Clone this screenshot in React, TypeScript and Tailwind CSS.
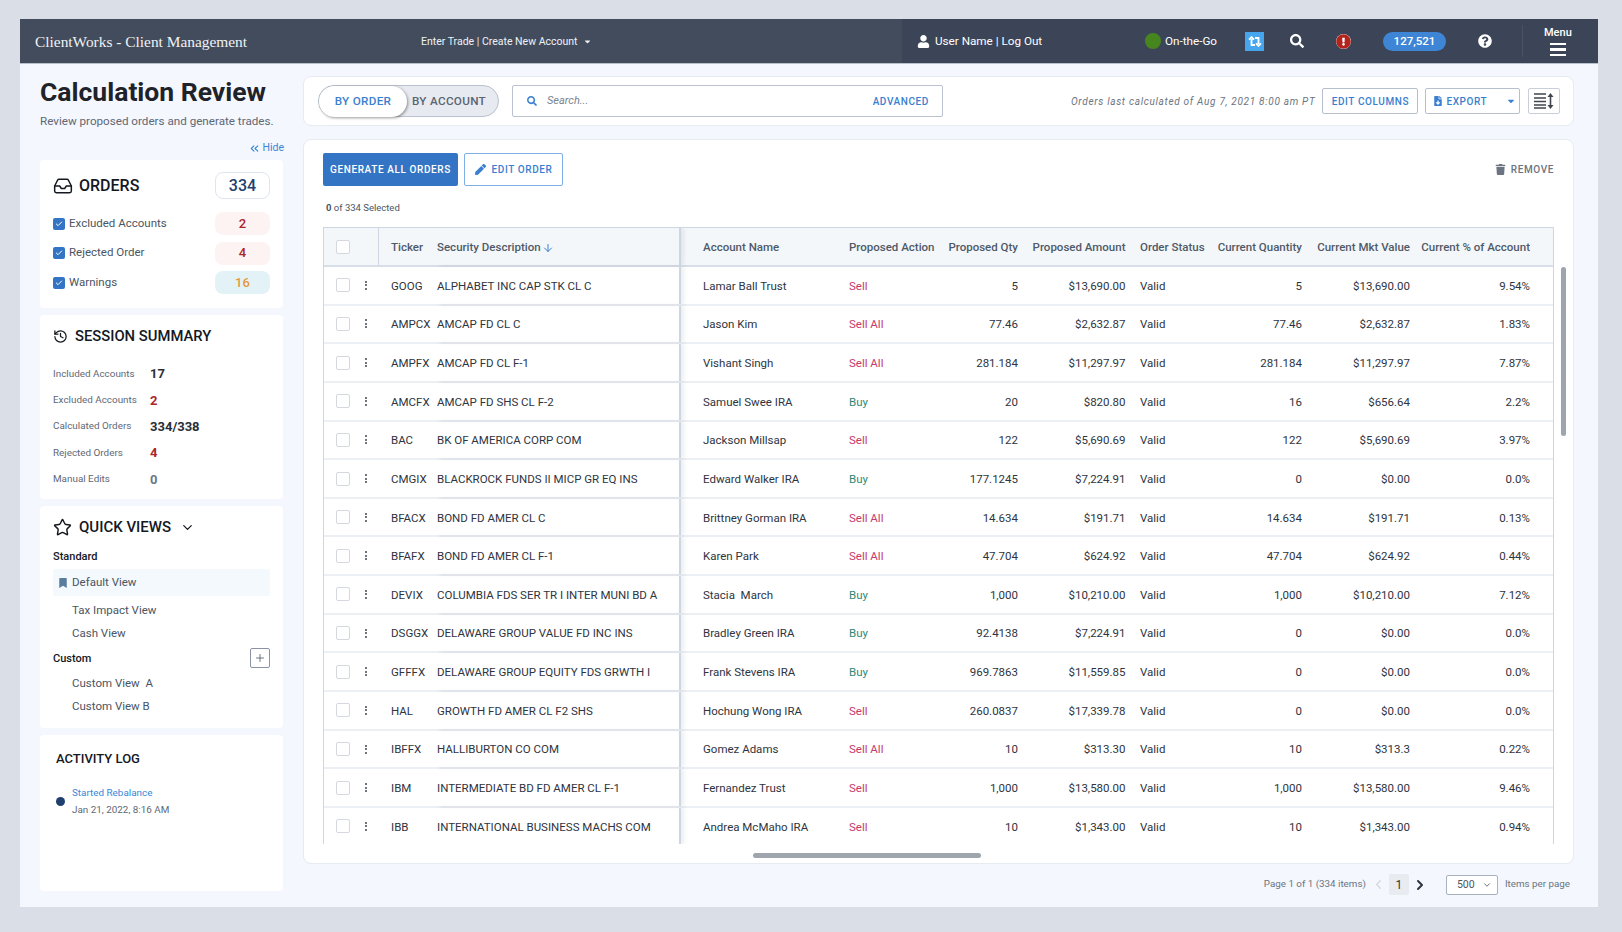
import { ChevronDown, ChevronLeft, ChevronRight, ChevronsLeft, History, Inbox, Plus, Star, ArrowDown, Check } from "lucide-react";
import { FaBookmark, FaCaretDown, FaExclamationCircle, FaFileDownload, FaPen, FaQuestionCircle, FaSearch, FaTrash, FaUser } from "react-icons/fa";

const rows = [
  ["GOOG", "ALPHABET INC CAP STK CL C", "Lamar Ball Trust", "Sell", "5", "$13,690.00", "5", "$13,690.00", "9.54%"],
  ["AMPCX", "AMCAP FD CL C", "Jason Kim", "Sell All", "77.46", "$2,632.87", "77.46", "$2,632.87", "1.83%"],
  ["AMPFX", "AMCAP FD CL F-1", "Vishant Singh", "Sell All", "281.184", "$11,297.97", "281.184", "$11,297.97", "7.87%"],
  ["AMCFX", "AMCAP FD SHS CL F-2", "Samuel Swee IRA", "Buy", "20", "$820.80", "16", "$656.64", "2.2%"],
  ["BAC", "BK OF AMERICA CORP COM", "Jackson Millsap", "Sell", "122", "$5,690.69", "122", "$5,690.69", "3.97%"],
  ["CMGIX", "BLACKROCK FUNDS II MICP GR EQ INS", "Edward Walker IRA", "Buy", "177.1245", "$7,224.91", "0", "$0.00", "0.0%"],
  ["BFACX", "BOND FD AMER CL C", "Brittney Gorman IRA", "Sell All", "14.634", "$191.71", "14.634", "$191.71", "0.13%"],
  ["BFAFX", "BOND FD AMER CL F-1", "Karen Park", "Sell All", "47.704", "$624.92", "47.704", "$624.92", "0.44%"],
  ["DEVIX", "COLUMBIA FDS SER TR I INTER MUNI BD A", "Stacia  March", "Buy", "1,000", "$10,210.00", "1,000", "$10,210.00", "7.12%"],
  ["DSGGX", "DELAWARE GROUP VALUE FD INC INS", "Bradley Green IRA", "Buy", "92.4138", "$7,224.91", "0", "$0.00", "0.0%"],
  ["GFFFX", "DELAWARE GROUP EQUITY FDS GRWTH I", "Frank Stevens IRA", "Buy", "969.7863", "$11,559.85", "0", "$0.00", "0.0%"],
  ["HAL", "GROWTH FD AMER CL F2 SHS", "Hochung Wong IRA", "Sell", "260.0837", "$17,339.78", "0", "$0.00", "0.0%"],
  ["IBFFX", "HALLIBURTON CO COM", "Gomez Adams", "Sell All", "10", "$313.30", "10", "$313.3", "0.22%"],
  ["IBM", "INTERMEDIATE BD FD AMER CL F-1", "Fernandez Trust", "Sell", "1,000", "$13,580.00", "1,000", "$13,580.00", "9.46%"],
  ["IBB", "INTERNATIONAL BUSINESS MACHS COM", "Andrea McMaho IRA", "Sell", "10", "$1,343.00", "10", "$1,343.00", "0.94%"],
];

function TickBox() {
  return (
    <span className="flex h-[12px] w-[12px] items-center justify-center rounded-[2px] bg-[#3474c4]">
      <Check size={8} strokeWidth={3} className="text-white" />
    </span>
  );
}

function Orders() {
  const items = [
    { label: "Excluded Accounts", value: "2", cls: "bg-[#fdf3f3] text-[#a8262b]" },
    { label: "Rejected Order", value: "4", cls: "bg-[#fdf3f3] text-[#a8262b]" },
    { label: "Warnings", value: "16", cls: "bg-[#e3f2f6] text-[#e39a3b]" },
  ];
  return (
    <section className="h-[148px] rounded-[4px] bg-white px-[13px] pt-[12px]">
      <div className="flex h-[27px] items-center justify-between">
        <div className="flex items-center gap-[6px]">
          <Inbox size={20} strokeWidth={1.8} className="text-[#14181f]" />
          <span className="text-[16px] font-medium text-[#14181f]">ORDERS</span>
        </div>
        <span className="flex h-[27px] w-[55px] items-center justify-center rounded-[8px] border border-[#dfe5f0] text-[16px] font-medium text-[#1f3f6e]">334</span>
      </div>
      <ul className="mt-[13px] flex flex-col gap-[6.5px]">
        {items.map((item) => (
          <li key={item.label} className="flex h-[23px] items-center justify-between">
            <div className="flex items-center gap-[4px] text-[11.5px] text-[#4b5563]">
              <TickBox />
              {item.label}
            </div>
            <span className={"flex h-[23px] w-[55px] items-center justify-center rounded-[8px] text-[13px] font-medium " + item.cls}>{item.value}</span>
          </li>
        ))}
      </ul>
    </section>
  );
}

function Session() {
  const items = [
    ["Included Accounts", "17", "text-[#2b2f36]"],
    ["Excluded Accounts", "2", "text-[#a8262b]"],
    ["Calculated Orders", "334/338", "text-[#2b2f36]"],
    ["Rejected Orders", "4", "text-[#a8262b]"],
    ["Manual Edits", "0", "text-[#6b7686]"],
  ];
  return (
    <section className="h-[184px] rounded-[4px] bg-white px-[13px] pt-[12px]">
      <div className="flex h-[18px] items-center gap-[7px]">
        <History size={15} strokeWidth={2} className="text-[#14181f]" />
        <span className="text-[14.8px] font-medium text-[#14181f]">SESSION SUMMARY</span>
      </div>
      <ul className="mt-[16px] flex flex-col">
        {items.map(([label, value, cls]) => (
          <li key={label} className="flex h-[26.3px] items-center">
            <span className="w-[97px] text-[9.9px] text-[#5f6875]">{label}</span>
            <span className={"text-[13px] font-bold " + cls}>{value}</span>
          </li>
        ))}
      </ul>
    </section>
  );
}

function QuickViews() {
  const sub = "flex h-[23px] items-center pl-[19px] text-[11.5px] text-[#4b5563]";
  return (
    <section className="h-[222px] rounded-[4px] bg-white px-[13px] pt-[12px]">
      <div className="flex h-[18px] items-center">
        <Star size={19} strokeWidth={1.8} className="text-[#14181f]" />
        <span className="ml-[7px] text-[15px] font-medium text-[#14181f]">QUICK VIEWS</span>
        <ChevronDown size={15} strokeWidth={2} className="ml-[9px] text-[#14181f]" />
      </div>
      <div className="mt-[12px] flex h-[17px] items-center pt-[1px] text-[11px] font-medium text-[#14181f]">Standard</div>
      <div className="mt-[4px] flex h-[27px] items-center rounded-[2px] bg-[#f4f9fd] pl-[5px] pt-[1px] text-[11.5px] text-[#4b5563]">
        <FaBookmark size={10} className="text-[#5a7d9e]" />
        <span className="ml-[4px]">Default View</span>
      </div>
      <div className={sub + " mt-[3px] pt-[1px]"}>Tax Impact View</div>
      <div className={sub}>Cash View</div>
      <div className="flex h-[27px] items-center justify-between text-[11px] font-medium text-[#14181f]">
        <span className="pt-[1px]">Custom</span>
        <span className="mb-[2px] flex h-[20px] w-[20px] items-center justify-center rounded-[2px] border border-[#8a94a6]">
          <Plus size={12} strokeWidth={1.6} className="text-[#4b5563]" />
        </span>
      </div>
      <div className={sub}>Custom View&nbsp; A</div>
      <div className={sub}>Custom View B</div>
    </section>
  );
}

function ActivityLog() {
  return (
    <section className="h-[156px] rounded-[4px] bg-white pl-[16px] pt-[16px]">
      <h3 className="text-[13px] font-medium leading-[16px] text-[#14181f]">ACTIVITY LOG</h3>
      <div className="mt-[17px] flex items-center gap-[7px]">
        <span className="h-[9px] w-[9px] rounded-full bg-[#1f3f6e]" />
        <div className="text-[9.9px] leading-[17px]">
          <div className="text-[#3a86d8]">Started Rebalance</div>
          <div className="text-[#5f6875]">Jan 21, 2022, 8:16 AM</div>
        </div>
      </div>
    </section>
  );
}

function Header() {
  return (
    <header className="flex h-[45px] items-stretch border-b border-[#b8c0cc] bg-[#3c4557] text-white">
      <div className="flex w-[882px] items-center bg-[#434c5c] pl-[15px]">
        <span className="w-[386px] pt-[1px] font-['Liberation_Serif',serif] text-[15.4px] text-[#f0f2f5]">ClientWorks - Client Management</span>
        <span className="flex items-center gap-[5px] pt-[1px] text-[10.5px] text-[#f0f2f5]">
          Enter Trade | Create New Account
          <FaCaretDown size={9} />
        </span>
      </div>
      <div className="flex flex-1 items-center">
        <FaUser size={13} className="ml-[15px]" />
        <span className="ml-[5px] w-[210px] pt-[1px] text-[11.7px]">User Name | Log Out</span>
        <span className="h-[16px] w-[16px] rounded-full bg-[#47861f]" />
        <span className="ml-[4px] w-[80px] pt-[1px] text-[11.7px]">On-the-Go</span>
        <span className="flex h-[19px] w-[19px] items-center justify-center bg-[#46a5ec]">
          <svg width="14" height="11" viewBox="0 0 14 11" fill="none" stroke="white" strokeWidth="1.8">
            <path d="M3.5 3v6h3.5M1 3.6l2.5-2.5L6 3.6" />
            <path d="M10.5 8V2H7M8 7.4l2.5 2.5L13 7.4" />
          </svg>
        </span>
        <FaSearch size={14} className="ml-[26px]" />
        <span className="ml-[32px] flex h-[15px] w-[15px] items-center justify-center rounded-full bg-white">
          <FaExclamationCircle size={15} className="text-[#b3241c]" />
        </span>
        <span className="ml-[32px] flex h-[19px] w-[63px] items-center justify-center rounded-full bg-[#3f85d6] pt-[2px] text-[11.5px] font-medium">127,521</span>
        <FaQuestionCircle size={14} className="ml-[32px]" />
        <span className="ml-[30px] h-[32px] w-px bg-[#4a5366]" />
        <div className="ml-[21px] flex flex-col items-center">
          <span className="text-[11px] font-medium leading-[14px]">Menu</span>
          <span className="mt-[3px] flex w-[16px] flex-col gap-[3px]">
            <span className="h-[2.5px] bg-white" />
            <span className="h-[2.5px] bg-white" />
            <span className="h-[2.5px] bg-white" />
          </span>
        </div>
      </div>
    </header>
  );
}

function Toolbar() {
  const btn = "flex h-[26px] items-center rounded-[2px] border border-[#b6c0cc] text-[10px] font-medium tracking-[0.6px] text-[#3a7fd0]";
  return (
    <section className="flex h-[50px] items-center rounded-[8px] border border-[#e6eaf1] bg-white pl-[14px]">
      <div className="flex h-[32px] w-[181px] items-center rounded-full border border-[#b9c2ce] bg-[#e7eaf0] pt-[1px] text-[11.7px] font-medium tracking-[0.3px]">
        <span className="flex h-[31px] w-[88px] items-center justify-center rounded-full bg-white text-[#3a7fd0] shadow-[1px_1px_3px_rgba(0,0,0,0.4)]">BY ORDER</span>
        <span className="ml-[5px] text-[#5b6470]">BY ACCOUNT</span>
      </div>
      <div className="ml-[13px] flex h-[32px] w-[431px] items-center justify-between rounded-[2px] border border-[#b9c2ce] pl-[14px] pr-[13px]">
        <div className="flex items-center gap-[10px]">
          <FaSearch size={10} className="text-[#3a7fd0]" />
          <span className="text-[11px] italic text-[#7a8490]">Search...</span>
        </div>
        <span className="text-[10px] font-medium tracking-[0.6px] text-[#3a7fd0]">ADVANCED</span>
      </div>
      <span className="ml-[128px] text-[10px] italic tracking-[0.7px] text-[#6b7480]">Orders last calculated of Aug 7, 2021 8:00 am PT</span>
      <span className={btn + " ml-[7px] w-[96px] justify-center"}>EDIT COLUMNS</span>
      <span className={btn + " ml-[7px] w-[95px] pl-[7px]"}>
        <FaFileDownload size={10} />
        <span className="ml-[3px]">EXPORT</span>
        <FaCaretDown size={10} className="ml-[19px]" />
      </span>
      <span className="ml-[8px] flex h-[26px] w-[32px] items-center justify-center rounded-[2px] border border-[#c8cfd9]">
        <svg width="20" height="16" viewBox="0 0 20 16" className="text-[#3f4650]">
          <path d="M0 1h12M0 5h12M0 8.5h12M0 12h12M0 15h12" stroke="currentColor" strokeWidth="1.6" />
          <path d="M16.5 2v12" stroke="currentColor" strokeWidth="1.6" />
          <path d="M16.5 0l3 4h-6zM16.5 16l3-4h-6z" fill="currentColor" />
        </svg>
      </span>
    </section>
  );
}

function CheckCell() {
  return <span className="h-[14px] w-[14px] rounded-[2px] border border-[#d5d9df] bg-white" />;
}

function Table() {
  const c1 = "w-[55px] shrink-0";
  const ticker = "w-[58px] shrink-0 pl-[12px]";
  const sec = "flex h-full w-[244px] shrink-0 items-center border-r-2 border-[#cdd6e2] shadow-[3px_0_4px_rgba(120,135,155,0.14)]";
  const account = "w-[168px] shrink-0 pl-[22px]";
  const action = "w-[99px] shrink-0";
  const qty = "w-[70px] shrink-0 text-right";
  const amt = "w-[107.5px] shrink-0 text-right";
  const status = "w-[90.5px] shrink-0 pl-[14.5px]";
  const curq = "w-[86px] shrink-0 text-right";
  const mkt = "w-[108px] shrink-0 text-right";
  const pct = "w-[120px] shrink-0 text-right";
  return (
    <div className="h-[617px] overflow-hidden border-x border-t border-[#cdd6e2]">
      <div className="flex h-[39px] items-center whitespace-nowrap border-b-2 border-[#d8dfe8] bg-[#f4f7fa] text-[11.5px] font-medium text-[#4f5a68]">
        <div className={c1 + " flex h-full items-center border-r border-[#cdd6e2] pl-[12px]"}>
          <CheckCell />
        </div>
        <div className={ticker + " pt-[3px]"}>Ticker</div>
        <div className={sec + " pt-[3px]"}>
          Security Description
          <ArrowDown size={12} strokeWidth={2} className="ml-[1px] text-[#3a7fd0]" />
        </div>
        <div className={account + " pt-[3px]"}>Account Name</div>
        <div className={action + " pt-[3px]"}>Proposed Action</div>
        <div className={qty + " pt-[3px]"}>Proposed Qty</div>
        <div className={amt + " pt-[3px]"}>Proposed Amount</div>
        <div className={status + " pt-[3px]"}>Order Status</div>
        <div className={curq + " pt-[3px]"}>Current Quantity</div>
        <div className={mkt + " pt-[3px]"}>Current Mkt Value</div>
        <div className={pct + " pt-[3px]"}>Current % of Account</div>
      </div>
      {rows.map((r) => (
        <div key={r[0]} className="flex h-[38.65px] items-center border-b-2 border-[#eceff3] text-[11.5px] text-[#2e3440]">
          <div className={c1 + " flex items-center pl-[12px]"}>
            <CheckCell />
            <span className="ml-[15px] flex flex-col gap-[1.5px]">
              <span className="h-[2px] w-[2px] rounded-full bg-[#3f4650]" />
              <span className="h-[2px] w-[2px] rounded-full bg-[#3f4650]" />
              <span className="h-[2px] w-[2px] rounded-full bg-[#3f4650]" />
            </span>
          </div>
          <div className={ticker + " pt-[2px]"}>{r[0]}</div>
          <div className={sec + " pt-[2px]"}>{r[1]}</div>
          <div className={account + " whitespace-pre pt-[2px]"}>{r[2]}</div>
          <div className={action + " pt-[2px]" + (r[3] === "Buy" ? " text-[#2f8a76]" : " text-[#c63a6c]")}>{r[3]}</div>
          <div className={qty + " pt-[2px]"}>{r[4]}</div>
          <div className={amt + " pt-[2px]"}>{r[5]}</div>
          <div className={status + " pt-[2px]"}>Valid</div>
          <div className={curq + " pt-[2px]"}>{r[6]}</div>
          <div className={mkt + " pt-[2px]"}>{r[7]}</div>
          <div className={pct + " pt-[2px]"}>{r[8]}</div>
        </div>
      ))}
    </div>
  );
}

function MainCard() {
  return (
    <section className="relative mt-[13px] h-[725px] rounded-[8px] border border-[#e6eaf1] bg-white pl-[19px] pr-[19px] pt-[13px]">
      <div className="flex items-center justify-between">
        <div className="flex items-center gap-[6px]">
          <span className="flex h-[33px] w-[135px] items-center justify-center rounded-[2px] bg-[#3474c4] text-[10px] font-medium tracking-[0.6px] text-white">GENERATE ALL ORDERS</span>
          <span className="flex h-[33px] w-[99px] items-center justify-center gap-[6px] rounded-[2px] border border-[#7db0e6] text-[10px] font-medium tracking-[0.6px] text-[#3a7fd0]">
            <FaPen size={11} />
            EDIT ORDER
          </span>
        </div>
        <span className="flex items-center gap-[5px] text-[10px] font-medium tracking-[0.6px] text-[#6b7480]">
          <FaTrash size={11} />
          REMOVE
        </span>
      </div>
      <p className="mb-[12px] mt-[14px] h-[15px] pl-[3px] text-[9.5px] leading-[15px] text-[#4b5563]">
        <span className="font-bold">0</span> of 334 Selected
      </p>
      <Table />
      <span className="absolute left-[1257px] top-[127px] h-[169px] w-[5px] rounded-full bg-[#9ea5ad]" />
      <span className="absolute left-[449px] top-[713px] h-[5px] w-[228px] rounded-full bg-[#9ea5ad]" />
    </section>
  );
}

function Pagination() {
  return (
    <div className="mt-[10px] flex h-[21px] items-center justify-end pr-[4px] text-[9.8px] text-[#6b7480]">
      <span>Page 1 of 1 (334 items)</span>
      <ChevronLeft size={15} strokeWidth={2} className="ml-[5px] text-[#d3d8df]" />
      <span className="ml-[3px] flex h-[21px] w-[20px] items-center justify-center rounded-[2px] bg-[#e8ebef] text-[12px] text-[#2e3440]">1</span>
      <ChevronRight size={16} strokeWidth={3} className="ml-[3px] text-[#2e3440]" />
      <span className="ml-[18px] flex h-[20px] w-[52px] items-center justify-between rounded-[2px] border border-[#a9b2bf] bg-white pl-[10px] pr-[5px] text-[10.5px] text-[#4b5563]">
        500
        <ChevronDown size={10} strokeWidth={2} />
      </span>
      <span className="ml-[7px]">Items per page</span>
    </div>
  );
}

export default function App() {
  return (
    <div className="h-[932px] w-[1622px] overflow-hidden bg-[#d9dee7] pl-[20px] pt-[19px] font-['Roboto',sans-serif]">
      <div className="h-[888px] w-[1578px] bg-[#f4f7fe]">
        <Header />
        <div className="flex">
          <aside className="ml-[20px] w-[244px]">
            <h1 className="mt-[11px] h-[34px] text-[26.5px] font-bold leading-[34px] text-[#1f2329]">Calculation Review</h1>
            <p className="mt-[5px] text-[11.65px] leading-[15px] text-[#5f6875]">Review proposed orders and generate trades.</p>
            <div className="mt-[12px] flex h-[14px] items-center justify-end text-[10.5px] text-[#3a86d8]">
              <ChevronsLeft size={13} />
              <span className="ml-[1px]">Hide</span>
            </div>
            <div className="mt-[5px] flex w-[243px] flex-col gap-[7px]">
              <Orders />
              <Session />
              <QuickViews />
              <ActivityLog />
            </div>
          </aside>
          <main className="ml-[19px] mt-[12px] w-[1271px]">
            <Toolbar />
            <MainCard />
            <Pagination />
          </main>
        </div>
      </div>
    </div>
  );
}
